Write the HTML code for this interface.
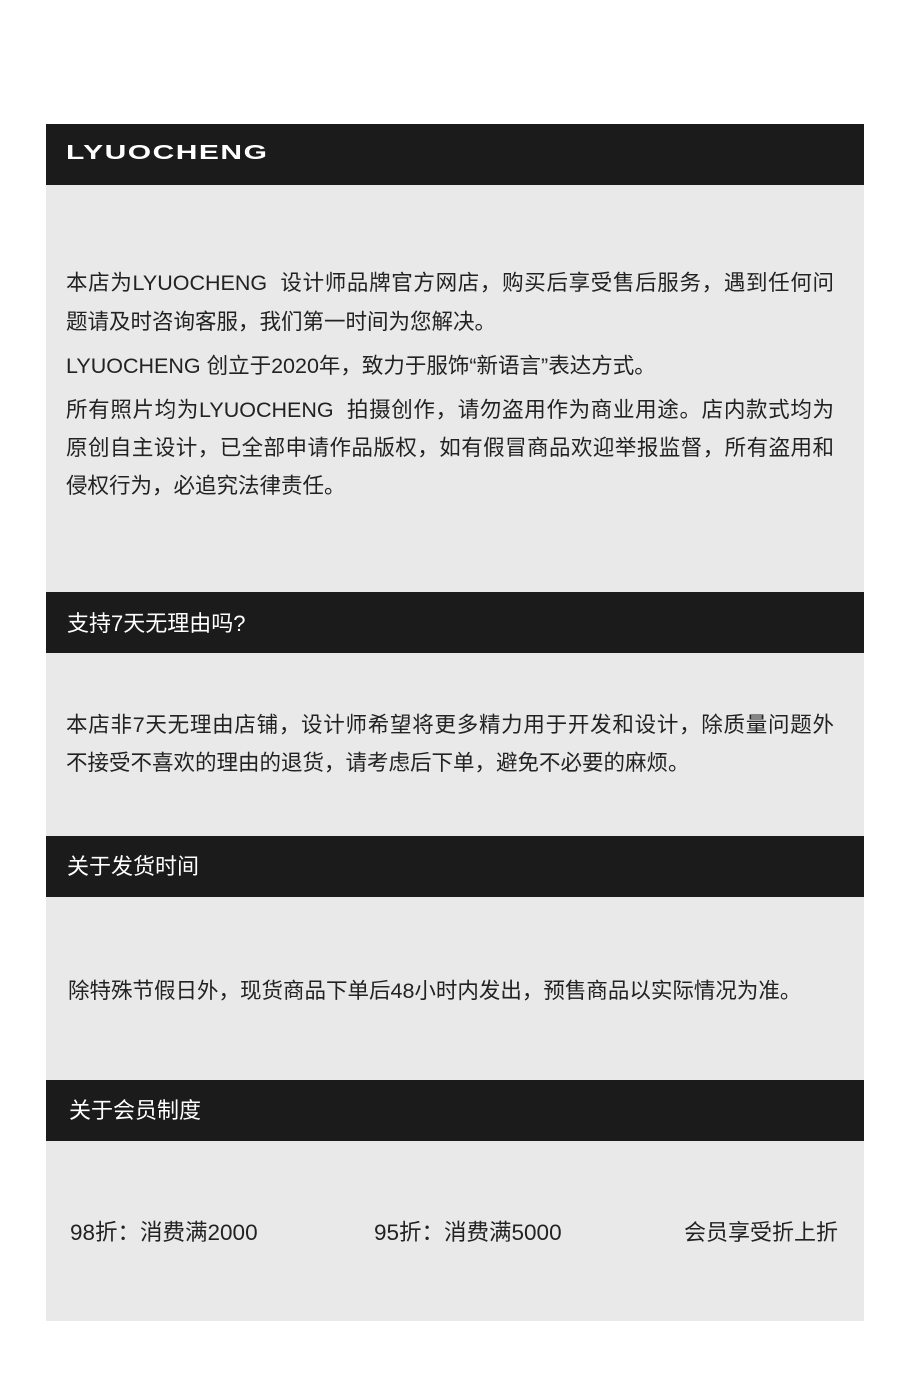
<!DOCTYPE html>
<html><head><meta charset="utf-8"><style>
*{margin:0;padding:0}
body{width:900px;height:1394px;background:#fff;position:relative;font-family:"Liberation Sans","Noto Sans CJK SC",sans-serif;color:#222;overflow:hidden}
.bar{position:absolute;left:46px;width:818px;height:61px;background:#1b1b1b}
.gr{position:absolute;left:46px;width:818px;background:#e9e9e9}
.h{position:absolute;left:67px;color:#fff;font-size:22px;line-height:30px;white-space:nowrap}
.t{position:absolute;left:66px;font-size:21.5px;line-height:30px;white-space:nowrap}
.j{width:768px;text-align:justify;text-align-last:justify;white-space:normal}
.logo{position:absolute;left:66px;top:142px;color:#fff;font-weight:bold;font-size:20px;line-height:22px;letter-spacing:1px;transform:scaleX(1.5);transform-origin:left center}
</style></head><body>
<div class="bar" style="top:124px"></div>
<div class="logo">LYUOCHENG</div>
<div class="gr" style="top:185px;height:407px"></div>
<div class="t j" style="top:268px">本店为LYUOCHENG&nbsp; 设计师品牌官方网店，购买后享受售后服务，遇到任何问</div>
<div class="t" style="top:307px">题请及时咨询客服，我们第一时间为您解决。</div>
<div class="t" style="top:351px">LYUOCHENG 创立于2020年，致力于服饰“新语言”表达方式。</div>
<div class="t j" style="top:395px">所有照片均为LYUOCHENG&nbsp; 拍摄创作，请勿盗用作为商业用途。店内款式均为</div>
<div class="t j" style="top:433px">原创自主设计，已全部申请作品版权，如有假冒商品欢迎举报监督，所有盗用和</div>
<div class="t" style="top:471px">侵权行为，必追究法律责任。</div>
<div class="bar" style="top:592px"></div>
<div class="h" style="top:609px">支持7天无理由吗?</div>
<div class="gr" style="top:653px;height:183px"></div>
<div class="t j" style="top:710px">本店非7天无理由店铺，设计师希望将更多精力用于开发和设计，除质量问题外</div>
<div class="t" style="top:748px">不接受不喜欢的理由的退货，请考虑后下单，避免不必要的麻烦。</div>
<div class="bar" style="top:836px"></div>
<div class="h" style="top:852px">关于发货时间</div>
<div class="gr" style="top:897px;height:183px"></div>
<div class="t" style="top:976px;left:68px">除特殊节假日外，现货商品下单后48小时内发出，预售商品以实际情况为准。</div>
<div class="bar" style="top:1080px"></div>
<div class="h" style="top:1096px;left:69px">关于会员制度</div>
<div class="gr" style="top:1141px;height:180px"></div>
<div class="t" style="top:1218px;left:70px;font-size:22.5px">98折：消费满2000</div>
<div class="t" style="top:1218px;left:374px;font-size:22.5px">95折：消费满5000</div>
<div class="t" style="top:1218px;left:684px;font-size:22px">会员享受折上折</div>
</body></html>
